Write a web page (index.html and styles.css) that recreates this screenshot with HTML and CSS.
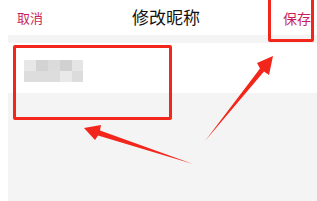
FILE: index.html
```html
<!DOCTYPE html>
<html lang="zh">
<head>
<meta charset="utf-8">
<link rel="stylesheet" href="styles.css">
</head>
<body>
<div class="screen">
  <header class="topbar">
    <span class="btn cancel">取消</span>
    <span class="title">修改昵称</span>
    <span class="btn save">保存</span>
  </header>
  <main class="content">
    <div class="gap"></div>
    <div class="field">
      <div class="mosaic">
        <i class="m1"></i><i class="m2"></i><i class="m3"></i><i class="m4"></i><i class="m5"></i>
        <i class="n1"></i><i class="n2"></i><i class="n3"></i>
      </div>
    </div>
    <div class="rest"></div>
  </main>
  <div class="mark mark-field"></div>
  <div class="mark mark-save"></div>
  <svg class="arrows" width="317" height="201" viewBox="0 0 317 201">
    <polygon points="193,164 100,130.5 101,125 84,128 95,140 98,135.5" fill="#f2261b"/>
    <polygon points="205,141 260,68.5 257,63 273,56 269,75 264,71.5" fill="#f2261b"/>
  </svg>
</div>
</body>
</html>
```
FILE: styles.css
```css
html, body {
  margin: 0;
  padding: 0;
  background: #ffffff;
}
.screen {
  position: relative;
  width: 317px;
  height: 201px;
  overflow: hidden;
  background: #ffffff;
  font-family: "Noto Sans CJK SC", "Noto Sans", sans-serif;
  display: flex;
  flex-direction: column;
}
.topbar {
  height: 35px;
  display: flex;
  align-items: center;
  justify-content: space-between;
  padding: 0 6px 0 17px;
  box-sizing: border-box;
  flex: none;
}
.btn {
  font-size: 13px;
  color: #c81f5c;
  line-height: 1;
}
.save {
  font-size: 14px;
  width: 40px;
  text-align: right;
}
.cancel {
  width: 40px;
}
.title {
  font-size: 17px;
  color: #111111;
  line-height: 1;
  margin-top: -2px;
  margin-left: 4px;
}
.content {
  margin-left: 8px;
  flex: 1;
  display: flex;
  flex-direction: column;
  background: #f4f4f4;
}
.gap {
  height: 8px;
  flex: none;
}
.field {
  height: 50px;
  background: #ffffff;
  display: flex;
  align-items: flex-start;
  padding: 17px 0 0 16px;
  box-sizing: border-box;
  flex: none;
}
.mosaic {
  display: grid;
  grid-template-columns: 12px 12px 12px 12px 11px;
  grid-template-rows: 11px 11px;
}
.mosaic i { display: block; }
.m1 { background: #e7e7e7; }
.m2 { background: #d3d3d3; }
.m3 { background: #dbdbdb; }
.m4 { background: #d1d1d1; }
.m5 { background: #e5e5e5; }
.n1 { background: #dddddd; grid-column: span 3; }
.n2 { background: #e9e9e9; }
.n3 { background: #dcdcdc; }
.rest { flex: 1; }
.mark {
  position: absolute;
  border: 3px solid #f2261b;
  border-radius: 2px;
  box-sizing: border-box;
}
.mark-field {
  left: 13px;
  top: 45px;
  width: 159px;
  height: 75px;
}
.mark-save {
  left: 268px;
  top: -4px;
  width: 46px;
  height: 46px;
}
.arrows {
  position: absolute;
  left: 0;
  top: 0;
}
```
